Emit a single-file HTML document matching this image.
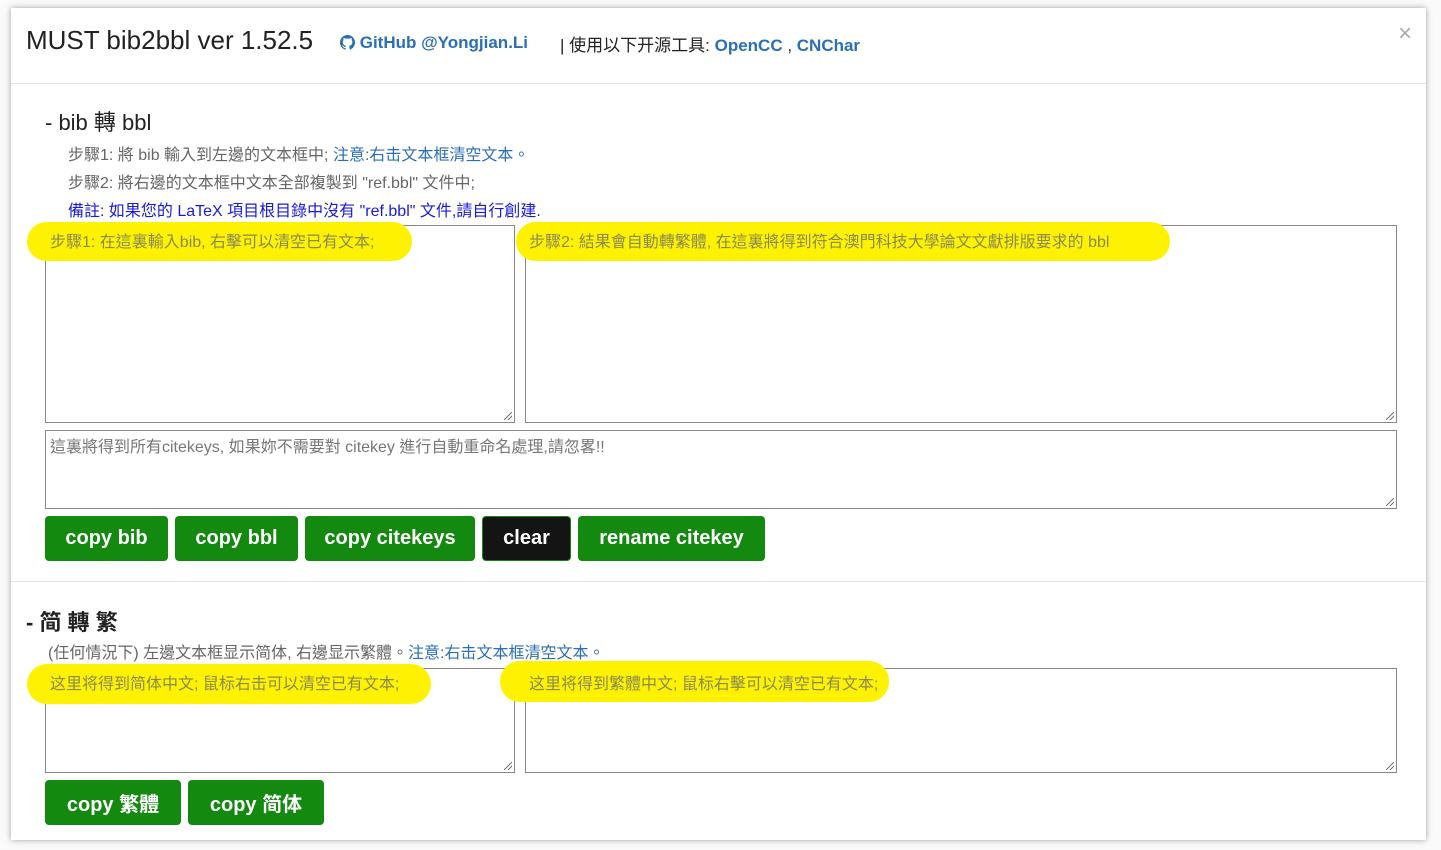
<!DOCTYPE html>
<html><head><meta charset="utf-8"><style>
*{box-sizing:border-box;margin:0;padding:0}
body{width:1441px;height:850px;background:#fafafa;font-family:"Liberation Sans","Noto Sans CJK TC",sans-serif;position:relative;overflow:hidden;color:#333}
.modal{position:absolute;left:11px;top:8px;width:1415px;height:832px;background:#fff;box-shadow:0 0 6px rgba(0,0,0,.35)}
.a{position:absolute;white-space:nowrap}
.ta{position:absolute;border:1px solid #888;background:#fff}
.ta:after{content:"";position:absolute;right:2px;bottom:2px;width:8px;height:8px;background:linear-gradient(135deg,transparent 45%,#777 45%,#777 55%,transparent 55%,transparent 70%,#777 70%,#777 80%,transparent 80%)}
.hl{position:absolute;background:#fff200;border-radius:20px}
.ph{position:absolute;font-size:16px;color:#8a8a50;white-space:nowrap}
.btn{position:absolute;background:#138a0f;color:#fff;font-weight:bold;font-size:20px;border-radius:4px;display:flex;align-items:center;justify-content:center;height:45px}
.blue{color:#2a6fba}
.sm{font-size:16px;color:#666}
</style></head><body>
<div class="modal"></div>
<div class="a" style="left:26px;top:25px;font-size:26px;color:#222">MUST bib2bbl ver 1.52.5</div>
<div class="a blue" style="left:340px;top:33px;font-size:17px;font-weight:bold"><svg width="15" height="15" viewBox="0 0 16 16" style="vertical-align:-2px"><path fill="#2a6fba" d="M8 0a8 8 0 0 0-2.5 15.6c.4 0 .5-.2.5-.4v-1.5c-2.2.5-2.7-1-2.7-1-.4-.9-.9-1.2-.9-1.2-.7-.5.1-.5.1-.5.8.1 1.2.8 1.2.8.7 1.3 1.9.9 2.4.7 0-.5.3-.9.5-1.1-1.800-.2-3.600-.9-3.600-4 0-.9.3-1.600.8-2.100-.1-.2-.4-1 .1-2.100 0 0 .7-.2 2.200.8a7.600 7.600 0 0 1 4 0c1.500-1 2.200-.8 2.200-.8.4 1.100.2 1.900.1 2.100.5.600.8 1.300.8 2.100 0 3.100-1.900 3.800-3.600 4 .3.300.6.800.6 1.500v2.200c0 .2.100.5.600.4A8 8 0 0 0 8 0z"/></svg> GitHub @Yongjian.Li</div>
<div class="a" style="left:560px;top:31px;font-size:17px;color:#222">| 使用以下开源工具: <b class="blue">OpenCC</b> , <b class="blue">CNChar</b></div>
<div class="a" style="left:1398px;top:20px;font-size:24px;color:#aaa">×</div>
<div class="a" style="left:11px;top:83px;width:1415px;height:1px;background:#e5e5e5"></div>
<div class="a" style="left:45px;top:105px;font-size:22px;color:#222">- bib 轉 bbl</div>
<div class="a sm" style="left:68px;top:141px">步驟1: 將 bib 輸入到左邊的文本框中; <span class="blue">注意:右击文本框清空文本。</span></div>
<div class="a sm" style="left:68px;top:169px">步驟2: 將右邊的文本框中文本全部複製到 "ref.bbl" 文件中;</div>
<div class="a sm" style="left:68px;top:197px;color:#1a1adf">備註: 如果您的 LaTeX 項目根目錄中沒有 "ref.bbl" 文件,請自行創建.</div>
<div class="ta" style="left:45px;top:225px;width:470px;height:198px"></div>
<div class="ta" style="left:525px;top:225px;width:872px;height:198px"></div>
<div class="ta" style="left:45px;top:430px;width:1352px;height:79px"></div>
<div class="ph" style="left:50px;top:433px;color:#777">這裏將得到所有citekeys, 如果妳不需要對 citekey 進行自動重命名處理,請忽畧!!</div>
<div class="hl" style="left:27px;top:222px;width:385px;height:39px"></div>
<div class="ph" style="left:50px;top:228px">步驟1: 在這裏輸入bib, 右擊可以清空已有文本;</div>
<div class="hl" style="left:516px;top:222px;width:654px;height:39px"></div>
<div class="ph" style="left:529px;top:228px">步驟2: 結果會自動轉繁體, 在這裏將得到符合澳門科技大學論文文獻排版要求的 bbl</div>
<div class="btn" style="left:45px;top:516px;width:123px">copy bib</div>
<div class="btn" style="left:175px;top:516px;width:123px">copy bbl</div>
<div class="btn" style="left:305px;top:516px;width:170px">copy citekeys</div>
<div class="btn" style="left:482px;top:516px;width:89px;background:#141414;border:1px solid #138a0f">clear</div>
<div class="btn" style="left:578px;top:516px;width:187px">rename citekey</div>
<div class="a" style="left:11px;top:581px;width:1415px;height:1px;background:#e5e5e5"></div>
<div class="a" style="left:26px;top:605px;font-size:22px;color:#222;font-weight:bold">- 简 轉 繁</div>
<div class="a sm" style="left:48px;top:639px">(任何情況下) 左邊文本框显示简体, 右邊显示繁體。<span class="blue">注意:右击文本框清空文本。</span></div>
<div class="ta" style="left:45px;top:668px;width:470px;height:105px"></div>
<div class="ta" style="left:525px;top:668px;width:872px;height:105px"></div>
<div class="hl" style="left:27px;top:664px;width:404px;height:40px"></div>
<div class="ph" style="left:50px;top:670px">这里将得到简体中文; 鼠标右击可以清空已有文本;</div>
<div class="hl" style="left:500px;top:661px;width:389px;height:41px"></div>
<div class="ph" style="left:529px;top:670px">这里将得到繁體中文; 鼠标右擊可以清空已有文本;</div>
<div class="btn" style="left:45px;top:780px;width:136px">copy 繁體</div>
<div class="btn" style="left:188px;top:780px;width:136px">copy 简体</div>
</body></html>
